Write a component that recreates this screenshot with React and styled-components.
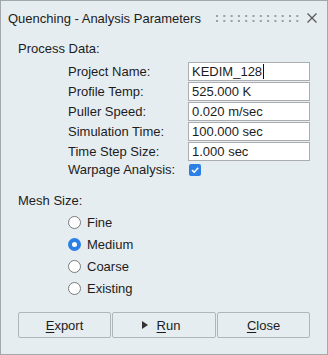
import styled, { createGlobalStyle } from "styled-components"

const Global = createGlobalStyle`
    html, body {
        margin: 0;
        padding: 0;
        background: #ffffff;
    }
    * {
        box-sizing: border-box;
    }
`

const Window = styled.div`
    width: 328px;
    height: 355px;
    border: 1px solid #a4a8ab;
    background-color: #e6edf1;
    font-family: "Liberation Sans", Arial, sans-serif;
    font-size: 13px;
    color: #1c1c1c;
    display: flex;
    flex-direction: column;
`

const TitleBar = styled.div`
    height: 34px;
    display: flex;
    align-items: center;
    padding: 0 9px 0 7px;
    .title {
        flex: 1;
    }
    .grip {
        display: flex;
        margin-right: 7px;
    }
    .close {
        display: flex;
    }
`

const Body = styled.div`
    padding: 0 17px;
    display: flex;
    flex-direction: column;
`

const Section = styled.div`
    margin-top: ${(p) => p.$top}px;
    line-height: 16px;
`

const Grid = styled.div`
    display: grid;
    grid-template-columns: 120px 122px;
    row-gap: 1px;
    padding-left: 50px;
    margin-top: 5px;
`

const Label = styled.div`
    height: ${(p) => p.$h || 19}px;
    display: flex;
    align-items: center;
`

const Field = styled.div`
    height: 19px;
    border: 1px solid #abadb0;
    background: #ffffff;
    padding-left: 3px;
    display: flex;
    align-items: center;
    .caret {
        display: inline-block;
        width: 1px;
        height: 15px;
        background: #111;
        margin-left: 1px;
    }
`

const CheckBox = styled.div`
    width: 12px;
    height: 12px;
    margin: 2px 0 0 1px;
    background: #2a80e4;
    border-radius: 2px;
    display: flex;
    align-items: center;
    justify-content: center;
`

const RadioList = styled.div`
    display: flex;
    flex-direction: column;
    gap: 9px;
    padding-left: 50px;
    margin-top: 7px;
`

const RadioRow = styled.div`
    display: flex;
    align-items: center;
    gap: 6px;
    height: 13px;
`

const Radio = styled.span`
    width: 13px;
    height: 13px;
    border-radius: 50%;
    border: ${(p) => (p.$on ? "none" : "1px solid #7a7a7a")};
    background: ${(p) => (p.$on ? "#2a80e4" : "#ffffff")};
    display: flex;
    align-items: center;
    justify-content: center;
    &::after {
        content: "";
        width: 5px;
        height: 5px;
        border-radius: 50%;
        background: #ffffff;
        display: ${(p) => (p.$on ? "block" : "none")};
    }
`

const ButtonRow = styled.div`
    display: flex;
    gap: 1px;
    margin-top: 17px;
`

const Button = styled.button`
    width: ${(p) => p.$w}px;
    height: 26px;
    border: 1px solid #b3b6b9;
    border-radius: 2px;
    background: #e6edf1;
    font-family: inherit;
    font-size: 13px;
    color: #1c1c1c;
    display: flex;
    align-items: center;
    justify-content: center;
    gap: 9px;
    padding: 0;
    u {
        text-decoration: underline;
        text-underline-offset: 2px;
    }
    .play {
        width: 0;
        height: 0;
        border-top: 4px solid transparent;
        border-bottom: 4px solid transparent;
        border-left: 6px solid #333;
        margin-left: -6px;
    }
`

const rows = [
    ["Project Name:", "KEDIM_128", true],
    ["Profile Temp:", "525.000 K"],
    ["Puller Speed:", "0.020 m/sec"],
    ["Simulation Time:", "100.000 sec"],
    ["Time Step Size:", "1.000 sec"],
]

const sizes = ["Fine", "Medium", "Coarse", "Existing"]

const gripDots = []
for (let i = 0; i < 12; i++) {
    gripDots.push(<rect key={"a" + i} x={i * 7.3} y="0" width="2" height="2" fill="#9c9fa2" />)
    gripDots.push(<rect key={"b" + i} x={i * 7.3} y="5" width="2" height="2" fill="#9c9fa2" />)
}

const App = () => {
    return (
        <Window>
            <Global />
            <TitleBar>
                <span className="title">Quenching - Analysis Parameters</span>
                <span className="grip">
                    <svg width="83" height="7" viewBox="0 0 83 7">{gripDots}</svg>
                </span>
                <span className="close">
                    <svg width="12" height="12" viewBox="0 0 12 12">
                        <path d="M1.5 1.5 L10.5 10.5 M10.5 1.5 L1.5 10.5" stroke="#555" strokeWidth="1.2" />
                    </svg>
                </span>
            </TitleBar>
            <Body>
                <Section $top={6}>Process Data:</Section>
                <Grid>
                    {rows.map(([label, value, caret]) => [
                        <Label key={label}>{label}</Label>,
                        <Field key={label + "v"}>
                            {value}
                            {caret && <span className="caret"></span>}
                        </Field>,
                    ])}
                    <Label $h={14}>Warpage Analysis:</Label>
                    <CheckBox>
                        <svg width="10" height="10" viewBox="0 0 10 10">
                            <path d="M2 5.2 L4.2 7.2 L8.2 2.8" stroke="#fff" strokeWidth="1.6" fill="none" />
                        </svg>
                    </CheckBox>
                </Grid>
                <Section $top={17}>Mesh Size:</Section>
                <RadioList>
                    {sizes.map((s) => (
                        <RadioRow key={s}>
                            <Radio $on={s === "Medium"} />
                            <span>{s}</span>
                        </RadioRow>
                    ))}
                </RadioList>
                <ButtonRow>
                    <Button $w={93}><span><u>E</u>xport</span></Button>
                    <Button $w={104}><span className="play"></span><span><u>R</u>un</span></Button>
                    <Button $w={93}><span><u>C</u>lose</span></Button>
                </ButtonRow>
            </Body>
        </Window>
    )
}

export default App
